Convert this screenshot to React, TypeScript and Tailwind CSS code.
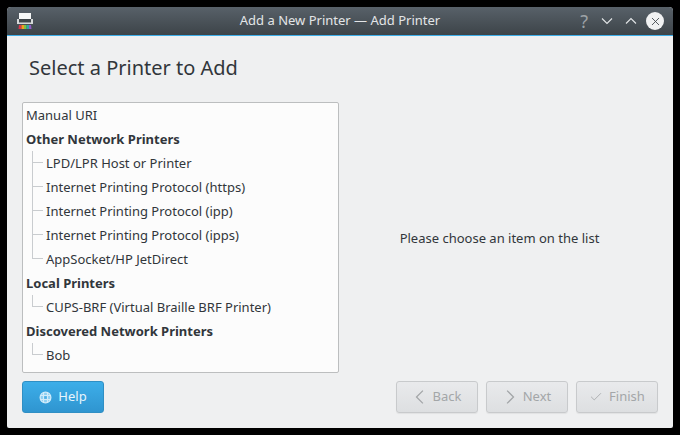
import React from 'react';
import { Check, X } from 'lucide-react';

const font = { fontFamily: '"Noto Sans", sans-serif' };

type Row = { label: string; kind: 'top' | 'group' | 'child' | 'last' };

const rows: Row[] = [
  { label: 'Manual URI', kind: 'top' },
  { label: 'Other Network Printers', kind: 'group' },
  { label: 'LPD/LPR Host or Printer', kind: 'child' },
  { label: 'Internet Printing Protocol (https)', kind: 'child' },
  { label: 'Internet Printing Protocol (ipp)', kind: 'child' },
  { label: 'Internet Printing Protocol (ipps)', kind: 'child' },
  { label: 'AppSocket/HP JetDirect', kind: 'last' },
  { label: 'Local Printers', kind: 'group' },
  { label: 'CUPS-BRF (Virtual Braille BRF Printer)', kind: 'last' },
  { label: 'Discovered Network Printers', kind: 'group' },
  { label: 'Bob', kind: 'last' },
];

const PrinterIcon = () => (
  <svg width="18" height="18" viewBox="0 0 18 18">
    <rect x="3" y="1" width="12" height="6" fill="#f6f7f7" />
    <rect x="1" y="7" width="16" height="5" fill="#d5d8d9" />
    <rect x="3" y="7" width="12" height="3" fill="#3f464a" />
    <rect x="3" y="10" width="12" height="1" fill="#8e9497" />
    <path d="M3 13H5.5V17H2.5Z" fill="#d9364a" />
    <path d="M5.5 13H8V17H5.5Z" fill="#f39c1f" />
    <path d="M8 13H10.5V17H8Z" fill="#7cc242" />
    <path d="M10.5 13H13V17H10.5Z" fill="#2fa8a0" />
    <path d="M13 13H15L15.5 17H13Z" fill="#8e5bc4" />
  </svg>
);

const Chevron = ({ dir, size = 12, color }: { dir: 'up' | 'down' | 'left' | 'right'; size?: number; color: string }) => {
  const pts = {
    down: '1,3.5 6,8.5 11,3.5',
    up: '1,8.5 6,3.5 11,8.5',
    left: '8.5,0.5 3,6 8.5,11.5',
    right: '3.5,0.5 9,6 3.5,11.5',
  }[dir];
  return (
    <svg width={size} height={size} viewBox="0 0 12 12" className="shrink-0">
      <polyline points={pts} fill="none" stroke={color} strokeWidth="1.1" />
    </svg>
  );
};

// lifebuoy: light ring with four darker spots on the diagonals
const HelpIcon = () => (
  <svg width="13" height="13" viewBox="0 0 13 13" className="shrink-0">
    <circle cx="6.5" cy="6.5" r="5.4" fill="#8fd0f2" stroke="#d3ecfa" strokeWidth="1.2" />
    <path d="M4.5 1.2V11.8M8.5 1.2V11.8M1.2 4.5H11.8M1.2 8.5H11.8" stroke="#d3ecfa" strokeWidth="1.2" />
    <rect x="5.2" y="5.2" width="2.6" height="2.6" fill="#4fb0e6" />
  </svg>
);

const TreeRow = ({ row }: { row: Row }) => {
  const isChild = row.kind === 'child' || row.kind === 'last';
  return (
    <div className="flex h-[24px] items-center pl-[3px] text-[13px] text-[#31363b]">
      {isChild && (
        <div className="ml-[6px] mr-[3px] flex h-full w-[11px] shrink-0 flex-col">
          <div className="h-[12px] border-b border-l border-[#c9cccf]" />
          <div className={`flex-1 border-l ${row.kind === 'child' ? 'border-[#c9cccf]' : 'border-transparent'}`} />
        </div>
      )}
      <span className={`translate-y-px ${row.kind === 'group' ? 'font-bold' : ''}`}>{row.label}</span>
    </div>
  );
};

const WizardButton = ({ icon, label, gap }: { icon: React.ReactNode; label: string; gap: string }) => (
  <button className={`flex h-[32px] w-[82px] items-center justify-center rounded-[3px] border border-[#c8cacc] bg-gradient-to-b from-[#e9eaec] to-[#dddfe1] text-[13px] text-[#a3a6a8] shadow-[0_1px_1px_rgba(0,0,0,0.06)] ${gap}`}>
    {icon}
    {label}
  </button>
);

export default function App() {
  return (
    <div className="h-[435px] w-[680px] bg-black p-[7px]" style={font}>
      <div className="flex h-[421px] w-[666px] flex-col overflow-hidden rounded-t-[4px] rounded-b-[2px] bg-[#eff0f1]">
        {/* Title bar */}
        <div className="flex h-[29px] shrink-0 items-center border-b border-[#3daee9] bg-gradient-to-b from-[#586169] to-[#3d4449] px-[9px]">
          <div className="flex-1">
            <PrinterIcon />
          </div>
          <div className="text-center text-[13px] text-[#e3e5e7]">Add a New Printer — Add Printer</div>
          <div className="flex flex-1 items-center justify-end">
            <span className="mr-[13px] text-[18px] leading-none text-[#9da2a6]">?</span>
            <Chevron dir="down" color="#e3e5e7" />
            <div className="w-[12px]" />
            <Chevron dir="up" color="#e3e5e7" />
            <div className="w-[9px]" />
            <div className="flex h-[18px] w-[18px] items-center justify-center rounded-full bg-[#f0f1f2]">
              <X size={13} strokeWidth={1.6} className="text-[#3d4449]" />
            </div>
          </div>
        </div>

        <div className="flex flex-1 flex-col px-[15px]">
          <h1 className="h-[66px] pt-[18px] pl-[7px] text-[20px] leading-[28px] text-[#31363b]">Select a Printer to Add</h1>

          <div className="flex">
            <div className="h-[271px] w-[317px] shrink-0 rounded-[2px] border border-[#bcbebf] bg-[#fcfcfc]">
              {rows.map((row) => (
                <TreeRow key={row.label} row={row} />
              ))}
            </div>
            <div className="flex flex-1 items-center justify-center pt-[2px] pl-[2px] text-[13px] text-[#31363b]">
              Please choose an item on the list
            </div>
          </div>

          <div className="mt-[8px] flex items-center justify-between">
            <button className="flex h-[32px] w-[82px] items-center justify-center gap-[6px] rounded-[3px] border border-[#2f8fc4] bg-gradient-to-b from-[#3daee9] to-[#2f95d0] text-[13px] text-[#e8f5fc]">
              <HelpIcon />
              Help
            </button>
            <div className="flex gap-[8px]">
              <WizardButton icon={<Chevron dir="left" color="#a3a6a8" size={14} />} label="Back" gap="gap-[6px]" />
              <WizardButton icon={<Chevron dir="right" color="#a3a6a8" size={14} />} label="Next" gap="gap-[6px]" />
              <WizardButton icon={<Check size={14} strokeWidth={1.4} />} label="Finish" gap="gap-[6px]" />
            </div>
          </div>
        </div>
      </div>
    </div>
  );
}
